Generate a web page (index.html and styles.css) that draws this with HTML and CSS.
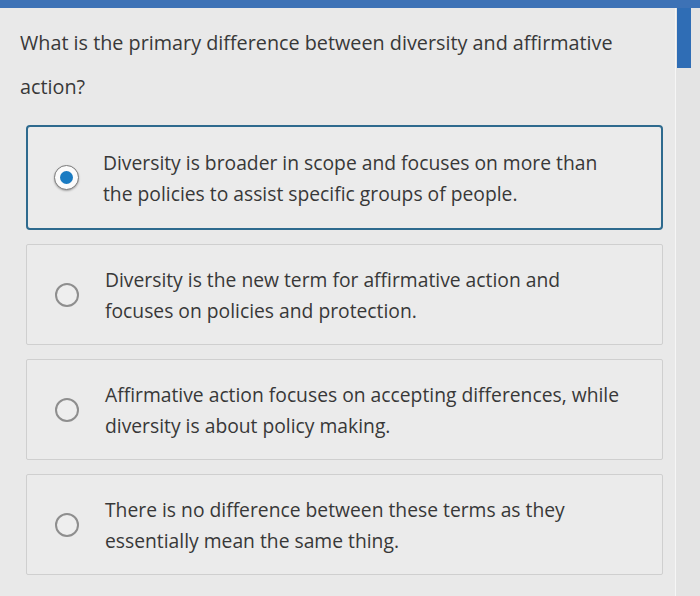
FILE: index.html
```html
<!DOCTYPE html>
<html>
<head>
<meta charset="utf-8">
<link rel="stylesheet" href="styles.css">
</head>
<body>
<div class="topbar"></div>
<div class="frame">
  <main class="content">
    <p class="question">What is the primary difference between diversity and affirmative action?</p>
    <div class="options">
      <label class="option selected">
        <span class="radio"><span class="dot"></span></span>
        <span class="text">Diversity is broader in scope and focuses on more than the policies to assist specific groups of people.</span>
      </label>
      <label class="option">
        <span class="radio"></span>
        <span class="text">Diversity is the new term for affirmative action and focuses on policies and protection.</span>
      </label>
      <label class="option">
        <span class="radio"></span>
        <span class="text">Affirmative action focuses on accepting differences, while diversity is about policy making.</span>
      </label>
      <label class="option">
        <span class="radio"></span>
        <span class="text">There is no difference between these terms as they essentially mean the same thing.</span>
      </label>
    </div>
  </main>
  <div class="scroll"><div class="thumb"></div></div>
</div>
</body>
</html>
```

FILE: styles.css
```css
html, body {
  margin: 0;
  padding: 0;
}
body {
  width: 700px;
  height: 596px;
  overflow: hidden;
  background: #e6e6e6;
  font-family: "Open Sans", "Liberation Sans", sans-serif;
  color: #383838;
}
.topbar {
  height: 8px;
  background: #3d72b6;
}
.frame {
  display: flex;
  height: 588px;
}
.content {
  width: 676px;
  border-right: 1px solid #f6f6f6;
  background: #e9e9e9;
  padding: 13px 0 0 20px;
  box-sizing: border-box;
}
.question {
  margin: 0;
  font-size: 19.8px;
  line-height: 44px;
  width: 610px;
}
.options {
  margin: 16px 0 0 6px;
  width: 637px;
  display: flex;
  flex-direction: column;
  gap: 14px;
}
.option {
  display: flex;
  align-items: center;
  height: 101px;
  box-sizing: border-box;
  border: 1px solid #cfcfcf;
  border-radius: 2px;
  background: #ebebeb;
  padding-left: 28px;
}
.option.selected {
  height: 105px;
  border: 2px solid #2e6a8e;
  border-radius: 4px;
  padding-left: 26px;
}
.radio {
  flex: none;
  width: 24px;
  height: 24px;
  box-sizing: border-box;
  border: 2px solid #8e8e8e;
  border-radius: 50%;
  background: #eeeeee;
  display: flex;
  align-items: center;
  justify-content: center;
}
.selected .radio {
  width: 25px;
  height: 25px;
  border: 1.5px solid #7c7c7c;
  background: #fbfbfb;
  box-shadow: 0 1px 2px rgba(0,0,0,0.3);
}
.dot {
  width: 13px;
  height: 13px;
  border-radius: 50%;
  background: #1a7bc2;
}
.text {
  margin-left: 26px;
  font-size: 19.3px;
  line-height: 31px;
  width: 524px;
}
.selected .text {
  margin-left: 24px;
}
.scroll {
  flex: 1;
  background: #e4e4e4;
  padding-left: 1px;
}
.thumb {
  width: 14px;
  height: 60px;
  background: #2f6db5;
}
```
